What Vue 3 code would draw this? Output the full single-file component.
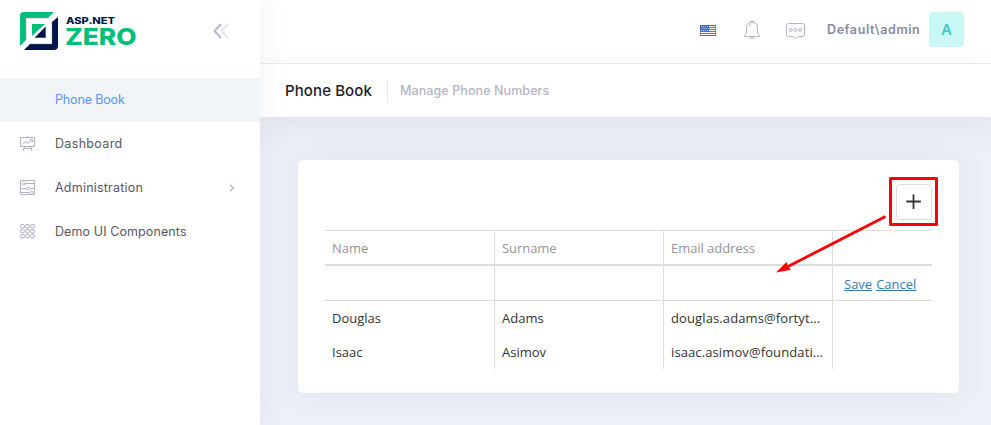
<script setup>
const menu = [
  { label: 'Phone Book', cls: 'w-pb', active: true },
  { label: 'Dashboard', cls: 'w-db', icon: 'board' },
  { label: 'Administration', cls: 'w-ad', icon: 'sliders', arrow: true },
  { label: 'Demo UI Components', cls: 'w-du', icon: 'grid' }
]
const contacts = [
  { name: 'Douglas', surname: 'Adams', email: 'douglas.adams@fortyt...' },
  { name: 'Isaac', surname: 'Asimov', email: 'isaac.asimov@foundati...' }
]
const gridDots = [2.5, 7.5, 12.5]
</script>

<template>
  <div class="page">
    <aside class="sidebar">
      <div class="brand">
        <svg class="logo" width="118" height="40" viewBox="0 0 118 40">
          <path fill="#00bf7c" d="M4 0H34L28 6H6V28L0 34V4Q0 0 4 0Z" />
          <path fill="#00154b" d="M38 5V34Q38 38 34 38H4L10 32H32V10Z" />
          <path fill="#00bf7c" d="M12 12H25L12 24Z" />
          <path fill="#00154b" d="M25.700 14.500V25.700H14.500Z" />
          <path fill="none" stroke="#bfc5d2" stroke-width=".6" d="M6.300 28V6.300H28M31.700 10V31.700H10" />
          <text class="lt" x="46" y="12" font-size="9.500" fill="#00154b" textLength="49" lengthAdjust="spacingAndGlyphs">ASP.NET</text>
          <text class="lt" x="45" y="33" font-size="23.500" fill="#00bf7c" textLength="71.500" lengthAdjust="spacingAndGlyphs">ZERO</text>
        </svg>
        <svg class="collapse" width="18" height="16" viewBox="0 0 18 16" fill="none" stroke-width="2">
          <path stroke="#b4b8d3" d="M9 1L2.500 8L9 15" />
          <path stroke="#e4e5f0" d="M16 1L9.500 8L16 15" />
        </svg>
      </div>
      <nav class="menu">
        <a v-for="m in menu" :key="m.label" class="item" :class="{ active: m.active }">
          <span class="ico">
            <svg v-if="m.icon" width="16" height="16" viewBox="0 0 16 16" fill="none" stroke="#b1b3c8" stroke-width="1">
              <g v-if="m.icon === 'board'">
                <path d="M0 1.500H15M.5 1.500V10.500H14.500V1.500M7.500 0V1.500M4.500 11L3 15M10.500 11L12 15M3.500 12.500H11.500" />
                <path d="M2.500 8.500L5.500 5.800L8 7.200L12.500 3.500M10 3.500H12.500V6" />
              </g>
              <g v-if="m.icon === 'sliders'">
                <path d="M.5 .5H14.500V14.500H.5ZM5 3.500H14M1 8.500H6M9.500 8.500H14M1 12.500H10" />
                <circle cx="3.500" cy="3.500" r="1.500" /><circle cx="7.800" cy="8.500" r="1.500" /><circle cx="11.500" cy="12.500" r="1.500" />
              </g>
              <g v-if="m.icon === 'grid'">
                <template v-for="y in gridDots" :key="y">
                  <rect v-for="x in gridDots" :key="x" :x="x - 2" :y="y - 2" width="4" height="3.400" rx="1.500" />
                </template>
              </g>
            </svg>
          </span>
          <span class="label" :class="m.cls">{{ m.label }}</span>
          <svg v-if="m.arrow" class="chev" width="6" height="8" viewBox="0 0 6 8" fill="none" stroke="#b4b8cd" stroke-width="1.300"><path d="M1 .7L4.500 4L1 7.300" /></svg>
        </a>
      </nav>
    </aside>

    <main class="main">
      <header class="topbar">
        <svg class="flag" width="16" height="11" viewBox="0 0 16 11">
          <path fill="#fbeeee" d="M0 0H16V11H0Z" />
          <path stroke="#e0504c" stroke-width="1" d="M0 .5H16M0 2.500H16M0 4.500H16M0 6.500H16M0 8.500H16M0 10.500H16" />
          <path fill="#3a6fd8" d="M0 0H9V7H0Z" />
          <path stroke="#bcd0f4" stroke-dasharray="1 1" d="M1 1.500H8M2 3.500H8M1 5.500H8" />
          <path fill="none" stroke="#6a3a3a" stroke-opacity=".35" d="M.5 .5H15.500V10.500H.5Z" />
        </svg>
        <svg class="bell" width="18" height="19" viewBox="0 0 18 19" fill="none" stroke="#b1b3c8">
          <path d="M3.500 13V7C3.500 4 5.500 2.500 9 2.500S14.500 4 14.500 7V13L16.500 15.500V16.500H1.500V15.500ZM7 2.500V1.500Q9 0 11 1.500V2.500M7 16.500Q7 18.500 9 18.500T11 16.500M6 6Q6.500 4.800 8 4.500" />
        </svg>
        <svg class="chat" width="20" height="17" viewBox="0 0 20 17" fill="none" stroke="#b1b3c8">
          <path d="M2.500 .5H16.500Q18.500 .5 18.500 2.500V11.500Q18.500 13.500 16.500 13.500H12L9.500 16L7 13.500H2.500Q.5 13.500 .5 11.500V2.500Q.5 .5 2.500 .5Z" />
          <circle cx="4.800" cy="7" r="1.500" /><circle cx="9.500" cy="7" r="1.500" /><circle cx="14.200" cy="7" r="1.500" />
        </svg>
        <span class="user">Default\admin</span>
        <span class="avatar">A</span>
      </header>

      <div class="subheader">
        <h1 class="title">Phone Book</h1>
        <span class="sep"></span>
        <span class="desc">Manage Phone Numbers</span>
      </div>

      <section class="content">
        <div class="card">
          <div class="tools">
            <button class="add">
              <svg width="16" height="16" viewBox="0 0 16 16" stroke="#333" stroke-width="1.800"><path d="M7.500 .5V15M.3 7.500H14.800" /></svg>
            </button>
          </div>
          <div class="table">
            <div class="row head"><span>Name</span><span>Surname</span><span>Email address</span><span></span></div>
            <div class="row edit"><span></span><span></span><span></span><span class="cmd"><a>Save</a><a>Cancel</a></span></div>
            <div v-for="c in contacts" :key="c.name" class="row">
              <span>{{ c.name }}</span><span>{{ c.surname }}</span><span class="email">{{ c.email }}</span><span></span>
            </div>
          </div>
        </div>
      </section>
    </main>

    <svg class="annotation" width="991" height="425" viewBox="0 0 991 425">
      <rect x="890.500" y="178.500" width="46" height="46" fill="none" stroke="#f00" stroke-width="3" stroke-linejoin="round" />
      <path d="M885.500 216.500L788 266.500" stroke="#f00" stroke-width="2.800" />
      <path d="M776 272.500L786.500 262L788 266.500L791 269.800Z" fill="#f00" />
    </svg>
  </div>
</template>

<style>
body { margin: 0; overflow: hidden; }
</style>

<style scoped>
* { box-sizing: border-box; }
.page { position: relative; display: flex; width: 991px; height: 425px; background: #edf0f8; overflow: hidden; font-family: Inter, "Open Sans", sans-serif; }
.sidebar { width: 260px; flex: none; background: #fff; z-index: 1; box-shadow: 0 0 28px rgba(82, 63, 105, .08); }
.brand { height: 78px; padding: 12px 30px 0 20px; display: flex; justify-content: space-between; }
.collapse { margin-top: 11px; }
.lt { font-family: Inter, sans-serif; font-weight: 800; }
.item { height: 44px; padding: 0 25px 0 20px; display: flex; align-items: center; color: #575962; }
.active { background: #f1f5f8; color: #5d93f8; }
.ico { width: 35px; height: 16px; }
.label { font-size: 12.500px; line-height: 20px; white-space: nowrap; }
.w-pb { letter-spacing: -.15px; }
.w-db { letter-spacing: .33px; }
.w-ad { letter-spacing: .22px; }
.w-du { letter-spacing: .1px; }
.chev { margin-left: auto; }
.main { flex: 1; display: flex; flex-direction: column; }
.topbar { height: 64px; padding: 0 27px 4px 0; background: #fff; border-bottom: 1px solid #ebebef; display: flex; align-items: center; justify-content: flex-end; }
.flag { margin: 2px 27px 0 0; }
.bell { margin-right: 25px; }
.chat { margin: 3px 21px 0 0; }
.user { width: 93px; font-size: 12.500px; font-weight: 600; color: #868aa0; white-space: nowrap; letter-spacing: .6px; }
.avatar { width: 35px; height: 35px; margin-left: 9px; border-radius: 4px; background: #c9f7f5; color: #38c8c0; font-size: 14.500px; font-weight: 600; display: flex; align-items: center; justify-content: center; }
.subheader { height: 53px; padding: 0 25px; background: #fff; display: flex; align-items: center; box-shadow: 0 10px 30px rgba(82, 63, 105, .08); }
.title { margin: 0; width: 102px; font-size: 15px; font-weight: 500; color: #1b1c24; white-space: nowrap; letter-spacing: .1px; }
.sep { width: 1px; height: 22px; background: #e7e8ef; }
.desc { margin-left: 12px; font-size: 12.500px; font-weight: 500; color: #b4b6c3; white-space: nowrap; letter-spacing: .09px; }
.content { padding: 43px 32px 0 38px; }
.card { height: 233px; padding: 24px 27px 0; border-radius: 5px; background: #fff; box-shadow: 0 0 30px rgba(82, 63, 105, .08); }
.tools { height: 46px; display: flex; justify-content: flex-end; }
.add { width: 36px; height: 36px; padding: 0; display: flex; align-items: center; justify-content: center; background: #fff; border: 1px solid #ddd; border-radius: 4px; }
.table { border-top: 1px solid #ddd; font-family: "Open Sans", "Noto Sans", sans-serif; font-size: 13px; color: #333; }
.row { display: grid; grid-template-columns: 170px 169px 169px 99px; height: 34px; }
.row > span { padding: 0 7px; line-height: 34px; border-right: 1px solid #ddd; white-space: nowrap; }
.row > span:last-child { border-right: 0; }
.row > .email { letter-spacing: .11px; }
.head { height: 35px; border-bottom: 2px solid #ddd; color: #959595; }
.head > span { letter-spacing: -.05px; }
.edit { height: 35px; border-bottom: 1px solid #ddd; }
.row > .cmd { padding: 1px 0 0 11px; display: flex; gap: 4px; }
.cmd a { color: #337ab7; text-decoration: underline; }
.annotation { position: absolute; left: 0; top: 0; z-index: 2; pointer-events: none; }
</style>
